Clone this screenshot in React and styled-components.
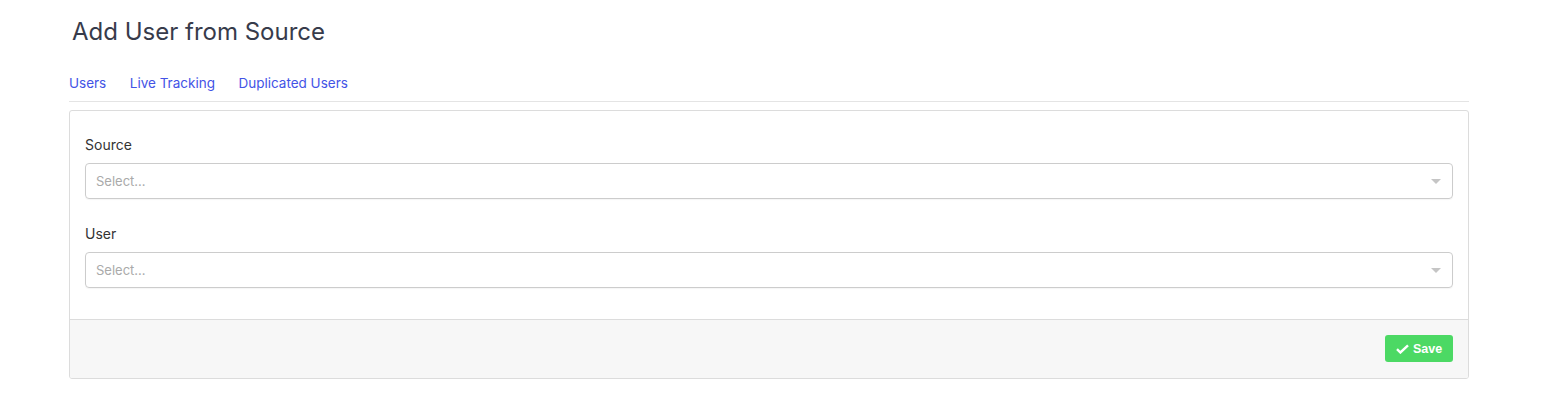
import React from "react";
import styled, { createGlobalStyle } from "styled-components";

const GlobalStyle = createGlobalStyle`
  body {
    margin: 0;
    background: #fff;
    font-family: Inter, "Open Sans", sans-serif;
  }
`;

const Page = styled.div`
  width: 1400px;
  padding: 16px 0 0 69px;
`;

const Title = styled.h1`
  margin: 0 0 0 3px;
  font-size: 24px;
  line-height: 32px;
  font-weight: 400;
  color: #373b4b;
`;

const Tabs = styled.nav`
  display: flex;
  gap: 23.5px;
  margin-top: 26px;
  padding-bottom: 9px;
  border-bottom: 1px solid #e4e4e4;
`;

const Tab = styled.a`
  font-size: 13.5px;
  line-height: 18px;
  color: #4353e6;
  text-decoration: none;
  cursor: pointer;
`;

const Card = styled.div`
  margin-top: 8px;
  border: 1px solid #dcdcdc;
  border-radius: 3px;
  overflow: hidden;
`;

const Body = styled.div`
  display: flex;
  flex-direction: column;
  gap: 25px;
  padding: 24px 15px 31px;
`;

const Field = styled.div`
  display: flex;
  flex-direction: column;
`;

const Label = styled.label`
  font-size: 14px;
  line-height: 20px;
  color: #333;
  margin-bottom: 8px;
`;

const Select = styled.div`
  display: flex;
  align-items: center;
  justify-content: space-between;
  height: 34px;
  padding: 0 10px;
  border: 1px solid #ccc;
  border-radius: 4px;
  box-shadow: 0 1px 1px rgba(0, 0, 0, 0.04);
  font-size: 13px;
  color: #aaa;
`;

const Caret = styled.span`
  width: 0;
  height: 0;
  margin-right: 1px;
  border-left: 5px solid transparent;
  border-right: 5px solid transparent;
  border-top: 5px solid #c5c5c5;
`;

const Footer = styled.div`
  display: flex;
  justify-content: flex-end;
  padding: 15px 15px 16px;
  background: #f7f7f7;
  border-top: 1px solid #dcdcdc;
`;

const SaveButton = styled.button`
  display: flex;
  align-items: center;
  gap: 4px;
  height: 27px;
  width: 68px;
  justify-content: center;
  border: none;
  border-radius: 3px;
  background: #4cd964;
  color: #fff;
  font-family: "Liberation Sans", Arial, sans-serif;
  font-weight: 700;
  font-size: 12.5px;
  cursor: pointer;
`;

const Check = () => (
  <svg width="13" height="10" viewBox="0 0 13 10">
    <path d="M1 5.2l3.4 3.3L12 1.4" fill="none" stroke="#fff" strokeWidth="2.4" />
  </svg>
);

const SelectField = ({ label }) => (
  <Field>
    <Label>{label}</Label>
    <Select>
      <span>Select...</span>
      <Caret />
    </Select>
  </Field>
);

export default function App() {
  return (
    <>
      <GlobalStyle />
      <Page>
        <Title>Add User from Source</Title>
        <Tabs>
          <Tab>Users</Tab>
          <Tab>Live Tracking</Tab>
          <Tab>Duplicated Users</Tab>
        </Tabs>
        <Card>
          <Body>
            <SelectField label="Source" />
            <SelectField label="User" />
          </Body>
          <Footer>
            <SaveButton>
              <Check />
              Save
            </SaveButton>
          </Footer>
        </Card>
      </Page>
    </>
  );
}
